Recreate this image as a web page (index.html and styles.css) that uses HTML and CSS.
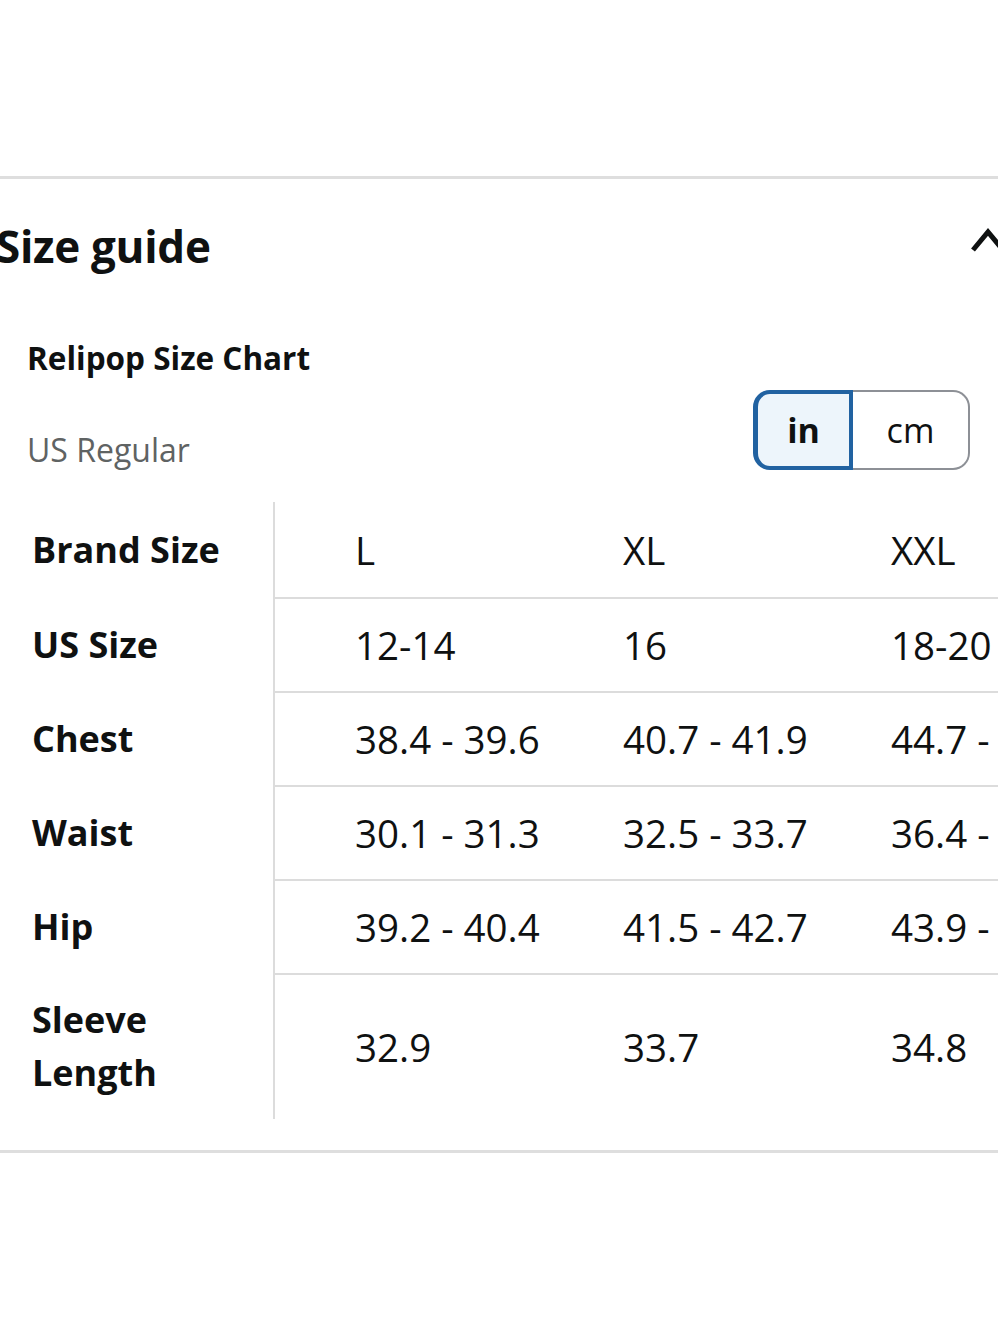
FILE: index.html
```html
<!DOCTYPE html>
<html lang="en">
<head>
<meta charset="utf-8">
<title>Size guide</title>
<link rel="stylesheet" href="styles.css">
</head>
<body>
<div class="page">
  <div class="top-space"></div>
  <div class="divider"></div>
  <section class="guide">
    <div class="guide-head">
      <h2 class="guide-title">Size guide</h2>
      <svg class="chevron" width="34" height="32" viewBox="0 0 34 32" aria-hidden="true">
        <path d="M3 23 L18 5 L33 23" fill="none" stroke="#0f1111" stroke-width="5" stroke-linejoin="miter" stroke-linecap="butt"/>
      </svg>
    </div>
    <h3 class="chart-title">Relipop Size Chart</h3>
    <div class="chart-meta">
      <span class="region">US Regular</span>
      <div class="unit-toggle">
        <span class="unit unit-active">in</span>
        <span class="unit">cm</span>
      </div>
    </div>
    <div class="table-wrap">
      <div class="size-table">
        <div class="cell label">Brand Size</div>
        <div class="cell value first">L</div>
        <div class="cell value first">XL</div>
        <div class="cell value first">XXL</div>

        <div class="cell label">US Size</div>
        <div class="cell value">12-14</div>
        <div class="cell value">16</div>
        <div class="cell value">18-20</div>

        <div class="cell label">Chest</div>
        <div class="cell value">38.4 - 39.6</div>
        <div class="cell value">40.7 - 41.9</div>
        <div class="cell value">44.7 - 45.9</div>

        <div class="cell label">Waist</div>
        <div class="cell value">30.1 - 31.3</div>
        <div class="cell value">32.5 - 33.7</div>
        <div class="cell value">36.4 - 37.6</div>

        <div class="cell label">Hip</div>
        <div class="cell value">39.2 - 40.4</div>
        <div class="cell value">41.5 - 42.7</div>
        <div class="cell value">43.9 - 45.1</div>

        <div class="cell label">Sleeve<br>Length</div>
        <div class="cell value">32.9</div>
        <div class="cell value">33.7</div>
        <div class="cell value">34.8</div>
      </div>
    </div>
  </section>
  <div class="divider bottom"></div>
</div>
</body>
</html>
```

FILE: styles.css
```css
* {
  box-sizing: border-box;
}

html, body {
  margin: 0;
  padding: 0;
  background: #ffffff;
}

body {
  font-family: "Open Sans", "Liberation Sans", Arial, sans-serif;
  color: #0f1111;
}

.page {
  width: 998px;
  height: 1333px;
  overflow: hidden;
  background: #ffffff;
}

.top-space {
  height: 176px;
}

.divider {
  height: 3px;
  background: #dedede;
}

.divider.bottom {
  margin-top: 31px;
}

.guide-head {
  display: flex;
  justify-content: space-between;
  align-items: center;
  padding-top: 39px;
  height: 95px;
}

.guide-title {
  margin: 0 0 0 -4px;
  font-size: 44px;
  line-height: 56px;
  font-weight: 700;
  letter-spacing: -0.3px;
}

.chevron {
  display: block;
  margin-right: -6px;
  margin-top: -6px;
}

.chart-title {
  margin: 64px 0 0 27px;
  font-size: 31.5px;
  line-height: 40px;
  font-weight: 700;
}

.chart-meta {
  display: flex;
  justify-content: space-between;
  align-items: flex-end;
  margin-top: 12px;
  padding-left: 27px;
  padding-right: 28px;
}

.region {
  font-size: 32px;
  line-height: 40px;
  color: #5f6363;
}

.unit-toggle {
  display: flex;
  height: 80px;
}

.unit {
  display: flex;
  align-items: center;
  justify-content: center;
  height: 80px;
  font-size: 34px;
  border: 2px solid #8d9096;
  border-left: none;
  border-radius: 0 17px 17px 0;
  width: 117px;
  color: #0f1111;
}

.unit-active {
  width: 100px;
  font-weight: 700;
  border: 4px solid #2162a1;
  border-left-width: 5px;
  border-radius: 17px 0 0 17px;
  background: #edf5fb;
}

.table-wrap {
  margin-top: 32px;
  overflow: hidden;
}

.size-table {
  display: grid;
  grid-template-columns: 275px repeat(3, 268px);
  grid-template-rows: 95px repeat(4, 94px) 146px;
  width: 1079px;
}

.cell {
  display: flex;
  align-items: center;
}

.label {
  padding-left: 32px;
  font-size: 36px;
  font-weight: 700;
  line-height: 53px;
  border-right: 2px solid #dcdcdc;
}

.value {
  padding-left: 80px;
  font-size: 38.5px;
  border-top: 2px solid #dcdcdc;
  white-space: nowrap;
}

.value.first {
  border-top: none;
}
```
